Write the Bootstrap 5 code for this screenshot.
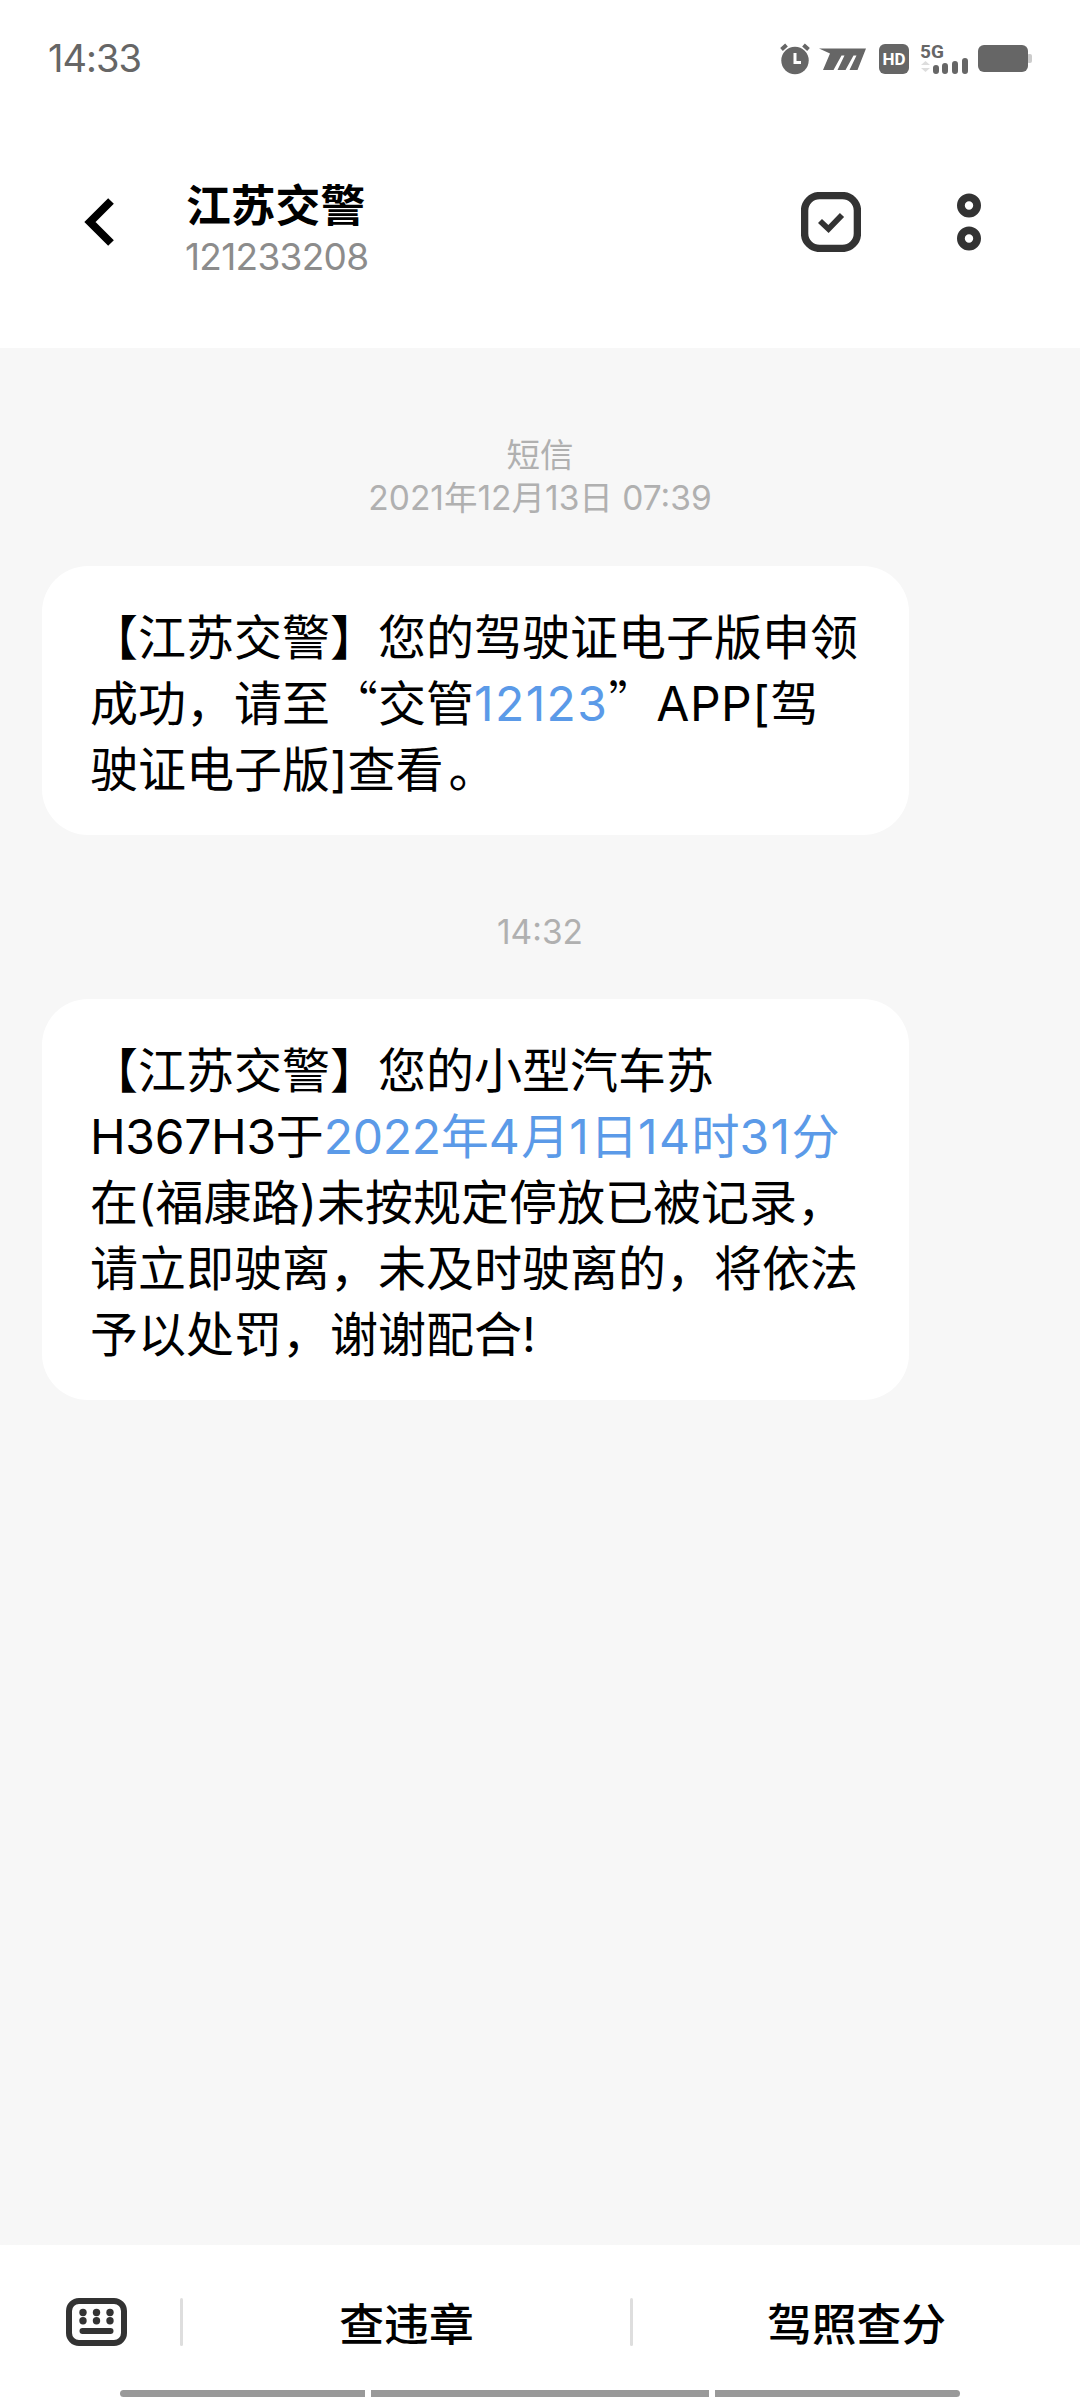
<!DOCTYPE html>
<html lang="zh-CN">
<head>
<meta charset="utf-8">
<meta name="viewport" content="width=device-width, initial-scale=1">
<title>江苏交警</title>
<link href="https://cdn.jsdelivr.net/npm/bootstrap@5.3.0/dist/css/bootstrap.min.css" rel="stylesheet">
<style>
body{font-family:Inter,"Noto Sans CJK SC",sans-serif;color:#000;background:#fff}
svg{display:block;flex:none}
.screen{width:1080px;height:2400px}
.statusbar{height:116px;padding:0 47px 0 48px;color:#666}
.clock{font-size:38px;letter-spacing:-1px;line-height:116px}
.status-icons{padding-top:2px}
.hd-icon,.net-icon{margin-left:11px}
.bat-icon{margin-left:8px}
.topbar{height:232px;padding:0 99px 20px 84px}
.contact{margin-left:72px;padding-top:15px}
.contact h1{font-size:44.8px;line-height:54px;font-weight:700;margin:0}
.contact p{font-size:37px;line-height:48px;color:#8c8c8c;font-weight:400;letter-spacing:-.7px;margin:0 0 0 -1px}
.more-icon{margin-left:96px}
.thread{background:#f7f7f7;padding:86px 42px 0}
.stamp{color:#b0b0b0;font-size:33.5px;line-height:43px}
.bubble{width:867px;border-radius:46px;padding:39px 48px 31px;font-size:48px;line-height:66.2px;white-space:nowrap}
.first-bubble{margin-top:46px}
.next-stamp{margin-top:76px}
.next-bubble{margin-top:45px}
.cjk{font-family:"Noto Sans CJK SC",sans-serif;line-height:1;font-weight:300}
.stop{margin-left:5px}
.sp{letter-spacing:1.4px}
.sp-s{letter-spacing:.5px}
.tight{letter-spacing:-.3px}
.lnk{color:#5b9ae8;text-decoration:none}
.toolbar{height:155px}
.quick{height:145px;padding-top:9px;font-size:44.8px;font-weight:500}
.quick-label{padding-top:7px}
.kbd-btn{width:180px;padding-left:66px}
.rule{width:3px;height:48px;background:#dedede;border-radius:2px}
.home{height:7px;padding:0 120px;gap:6px}
.home i{background:#999}
.home .edge{width:245px}
</style>
</head>
<body>
<div class="screen d-flex flex-column mx-auto overflow-hidden">
  <div class="statusbar d-flex justify-content-between align-items-center">
    <div class="clock">14:33</div>
    <div class="status-icons d-flex align-items-center">
      <svg width="30" height="32" viewBox="0 0 30 32"><circle cx="15" cy="17.5" r="13.7" fill="#666"/><path d="M1.500 6.500 6.500 2M28.500 6.500 23.500 2" stroke="#666" stroke-width="4"/><path d="M15 10v9.500h6" fill="none" stroke="#fff" stroke-width="3"/></svg>
      <svg class="ms-2" width="50" height="32" viewBox="0 0 50 32"><path d="M1 5.500h47L39.500 27h-8l7-14.500h-3L27.500 27h-8l7-14.500h-3L15.500 27H5l7-16.500z" fill="#666"/></svg>
      <svg class="hd-icon" width="30" height="32" viewBox="0 0 30 32"><rect y="1" width="30" height="30" rx="6" fill="#666"/><text x="15" y="22" text-anchor="middle" font-family="Roboto" font-weight="700" font-size="17" fill="#fff">HD</text></svg>
      <svg class="net-icon overflow-visible" width="50" height="32" viewBox="0 0 50 32"><text x="0" y="14.500" font-family="Roboto" font-weight="700" font-size="19" fill="#666">5G</text><path d="M1 22l4.500-4 4.500 4zM1 25h9l-4.500 4z" fill="#ddd"/><path d="M16 25v3M25 23v5M35 21v7M45 18v10" stroke="#666" stroke-width="6" stroke-linecap="round"/></svg>
      <svg class="bat-icon" width="55" height="32" viewBox="0 0 55 32"><rect x="49" y="11" width="5" height="9" rx="2" fill="#ccc"/><rect y="2" width="50" height="27" rx="6" fill="#666"/></svg>
    </div>
  </div>
  <header class="topbar d-flex align-items-center">
    <svg width="30" height="50" viewBox="0 0 30 50"><path d="M27 4 6 25 27 46" fill="none" stroke="#000" stroke-width="8"/></svg>
    <div class="contact flex-grow-1"><h1>江苏交警</h1><p>121233208</p></div>
    <svg width="60" height="60" viewBox="0 0 60 60" fill="none" stroke="#333"><rect x="3.600" y="3.600" width="52.800" height="52.800" rx="15" stroke-width="7.400"/><path d="M19 29l8.500 8L41 23" stroke-width="5.800"/></svg>
    <svg class="more-icon" width="24" height="58" viewBox="0 0 24 58" fill="none" stroke="#333" stroke-width="7.800"><circle cx="12" cy="12.500" r="8.100"/><circle cx="12" cy="45.500" r="8.100"/></svg>
  </header>
  <main class="thread flex-grow-1">
    <div class="stamp text-center">短信<br>2021年12月13日 07:39</div>
    <div class="bubble first-bubble bg-white">【江苏交警】您的驾驶证电子版申领<br>成功，请至<span class="cjk">“</span>交管<a class="lnk sp">12123</a><span class="cjk">”</span><span class="sp-s">APP[</span>驾<br>驶证电子版]查看<span class="stop">。</span></div>
    <div class="stamp next-stamp text-center">14:32</div>
    <div class="bubble next-bubble bg-white">【江苏交警】您的小型汽车苏<br><span class="tight">H367H3</span>于<a class="lnk"><span class="tight">2022</span>年<span class="sp">4</span>月<span class="sp">1</span>日<span class="sp">14</span>时<span class="sp">31</span>分</a><br>在(福康路)未按规定停放已被记录，<br>请立即驶离，未及时驶离的，将依法<br>予以处罚，谢谢配合!</div>
  </main>
  <footer class="toolbar bg-white">
    <div class="quick d-flex align-items-center">
      <div class="kbd-btn"><svg width="61" height="48" viewBox="0 0 61 48" fill="#333"><rect x="3" y="3" width="55" height="42" rx="10" fill="none" stroke="#333" stroke-width="6"/><circle cx="17" cy="14.500" r="3.700"/><circle cx="30.500" cy="14.500" r="3.700"/><circle cx="44" cy="14.500" r="3.700"/><circle cx="17" cy="22.700" r="3.700"/><circle cx="30.500" cy="22.700" r="3.700"/><circle cx="44" cy="22.700" r="3.700"/><rect x="13.500" y="30" width="34" height="6" rx="3"/></svg></div>
      <div class="rule"></div>
      <div class="quick-label text-center" style="width:447px">查违章</div>
      <div class="rule"></div>
      <div class="quick-label text-center flex-grow-1">驾照查分</div>
    </div>
    <div class="home d-flex"><i class="edge rounded-start-pill"></i><i class="flex-grow-1"></i><i class="edge rounded-end-pill"></i></div>
  </footer>
</div>
<script src="https://cdn.jsdelivr.net/npm/bootstrap@5.3.0/dist/js/bootstrap.bundle.min.js"></script>
</body>
</html>
